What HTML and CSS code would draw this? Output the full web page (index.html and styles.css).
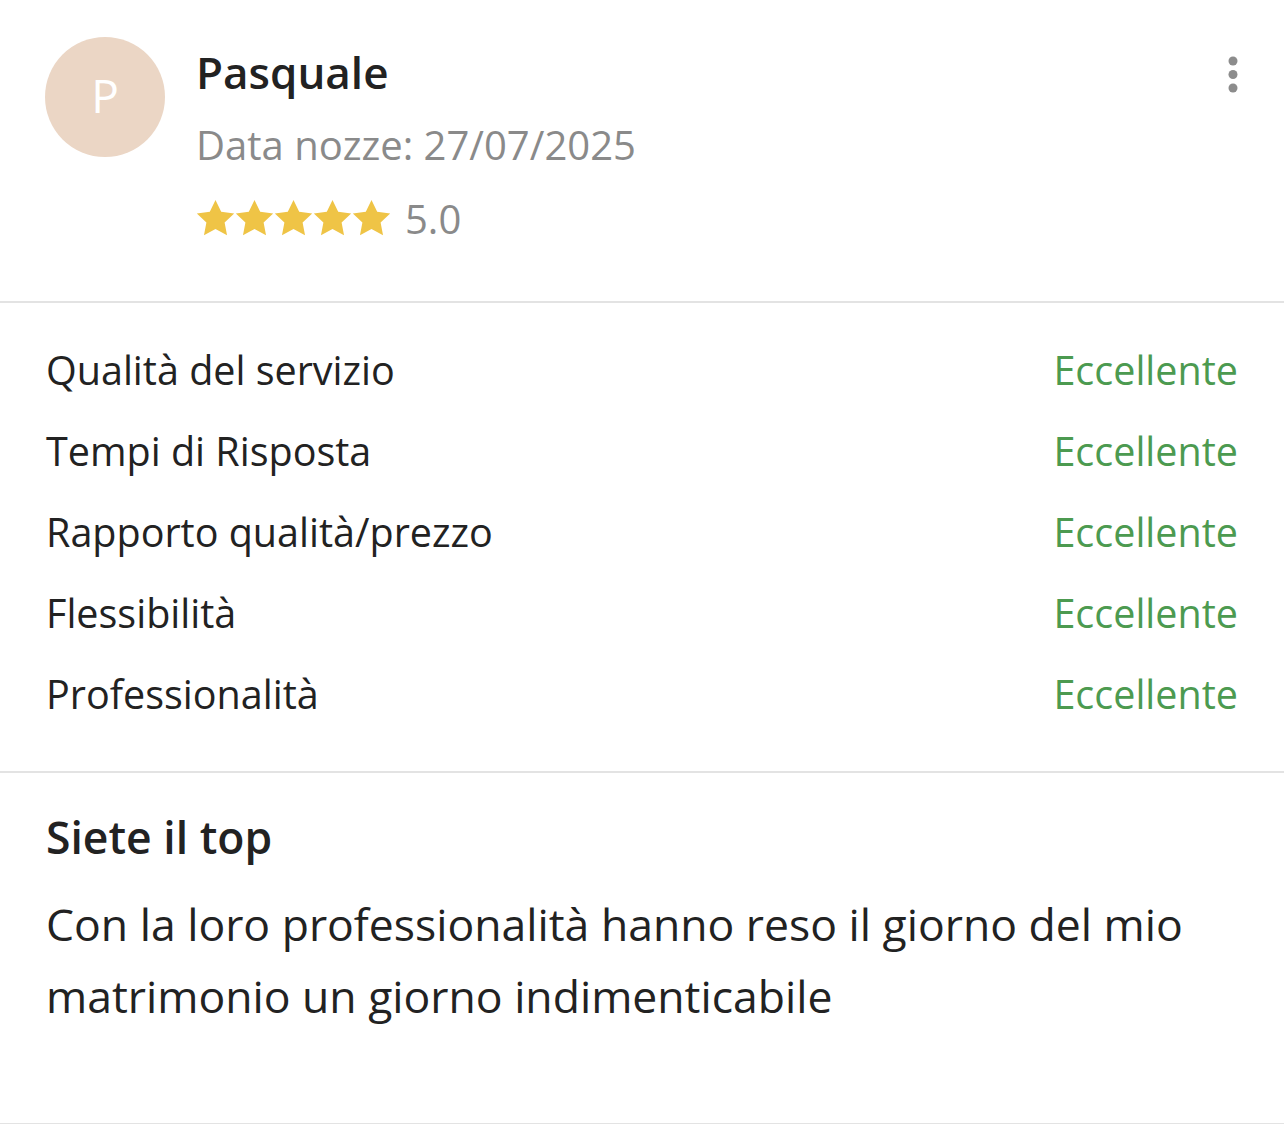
FILE: index.html
```html
<!DOCTYPE html>
<html lang="it">
<head>
    <meta charset="UTF-8">
    <meta name="viewport" content="width=device-width, initial-scale=1.0">
    <title>Recensione</title>
    <link rel="stylesheet" href="styles.css">
</head>
<body>
    <div class="review">
        <div class="review-header">
            <div class="avatar">P</div>
            <div class="author">
                <div class="author-name">Pasquale</div>
                <div class="wedding-date">Data nozze: 27/07/2025</div>
                <div class="rating">
                    <span class="stars">
                        <svg viewBox="0 0 24 24"><path d="M12 .6l3.5 7.3 8 1-5.9 5.5 1.5 7.9L12 18.4l-7.1 3.9 1.5-7.9L.5 8.9l8-1z"/></svg>
                        <svg viewBox="0 0 24 24"><path d="M12 .6l3.5 7.3 8 1-5.9 5.5 1.5 7.9L12 18.4l-7.1 3.9 1.5-7.9L.5 8.9l8-1z"/></svg>
                        <svg viewBox="0 0 24 24"><path d="M12 .6l3.5 7.3 8 1-5.9 5.5 1.5 7.9L12 18.4l-7.1 3.9 1.5-7.9L.5 8.9l8-1z"/></svg>
                        <svg viewBox="0 0 24 24"><path d="M12 .6l3.5 7.3 8 1-5.9 5.5 1.5 7.9L12 18.4l-7.1 3.9 1.5-7.9L.5 8.9l8-1z"/></svg>
                        <svg viewBox="0 0 24 24"><path d="M12 .6l3.5 7.3 8 1-5.9 5.5 1.5 7.9L12 18.4l-7.1 3.9 1.5-7.9L.5 8.9l8-1z"/></svg>
                    </span>
                    <span class="score">5.0</span>
                </div>
            </div>
            <button class="menu-button" type="button" aria-label="Altro">
                <svg viewBox="0 0 10 40"><circle cx="5" cy="6" r="4.5"/><circle cx="5" cy="19.5" r="4.5"/><circle cx="5" cy="33" r="4.5"/></svg>
            </button>
        </div>

        <div class="criteria">
            <div class="criteria-row">
                <span class="criteria-label">Qualità del servizio</span>
                <span class="criteria-value">Eccellente</span>
            </div>
            <div class="criteria-row">
                <span class="criteria-label">Tempi di Risposta</span>
                <span class="criteria-value">Eccellente</span>
            </div>
            <div class="criteria-row">
                <span class="criteria-label">Rapporto qualità/prezzo</span>
                <span class="criteria-value">Eccellente</span>
            </div>
            <div class="criteria-row">
                <span class="criteria-label">Flessibilità</span>
                <span class="criteria-value">Eccellente</span>
            </div>
            <div class="criteria-row">
                <span class="criteria-label">Professionalità</span>
                <span class="criteria-value">Eccellente</span>
            </div>
        </div>

        <div class="review-body">
            <h2 class="review-title">Siete il top</h2>
            <p class="review-text">Con la loro professionalità hanno reso il giorno del mio matrimonio un giorno indimenticabile</p>
        </div>
    </div>
</body>
</html>
```

FILE: styles.css
```css
body {
    margin: 0;
    background-color: #ffffff;
    font-family: 'Open Sans', 'Noto Sans', sans-serif;
    color: #222222;
}
.review {
    width: 1284px;
}
.review-header {
    display: flex;
    align-items: flex-start;
    padding: 37px 46px 48px 45px;
    border-bottom: 2px solid #e3e3e3;
}
.avatar {
    flex: 0 0 120px;
    height: 120px;
    border-radius: 50%;
    background-color: #ebd6c5;
    color: #ffffff;
    font-size: 46px;
    line-height: 116px;
    text-align: center;
}
.author {
    flex: 1;
    margin-left: 31px;
}
.author-name {
    font-size: 44px;
    font-weight: 600;
    line-height: 70px;
    color: #222222;
}
.wedding-date {
    font-size: 40px;
    line-height: 76px;
    color: #8a8a8a;
}
.rating {
    display: flex;
    align-items: center;
    height: 70px;
}
.stars {
    display: flex;
}
.stars svg {
    width: 39px;
    height: 39px;
    fill: #efc446;
}
.score {
    margin-left: 14px;
    font-size: 40px;
    color: #8a8a8a;
}
.menu-button {
    margin-top: 18px;
    padding: 0;
    border: none;
    background: none;
    width: 10px;
    height: 40px;
}
.menu-button svg {
    width: 10px;
    height: 40px;
    fill: #8c8c8c;
}
.criteria {
    padding: 27px 46px 36px 46px;
    border-bottom: 2px solid #e3e3e3;
}
.criteria-row {
    display: flex;
    justify-content: space-between;
    font-size: 39.5px;
    line-height: 81px;
}
.criteria-label {
    color: #222222;
}
.criteria-value {
    color: #4c9a50;
}
.review-body {
    padding: 36px 46px 91px 46px;
    border-bottom: 2px solid #e3e3e3;
}
.review-title {
    margin: 0 0 23px 0;
    font-size: 44.5px;
    font-weight: 600;
    line-height: 56px;
}
.review-text {
    margin: 0;
    font-size: 44.5px;
    line-height: 72px;
}
```
